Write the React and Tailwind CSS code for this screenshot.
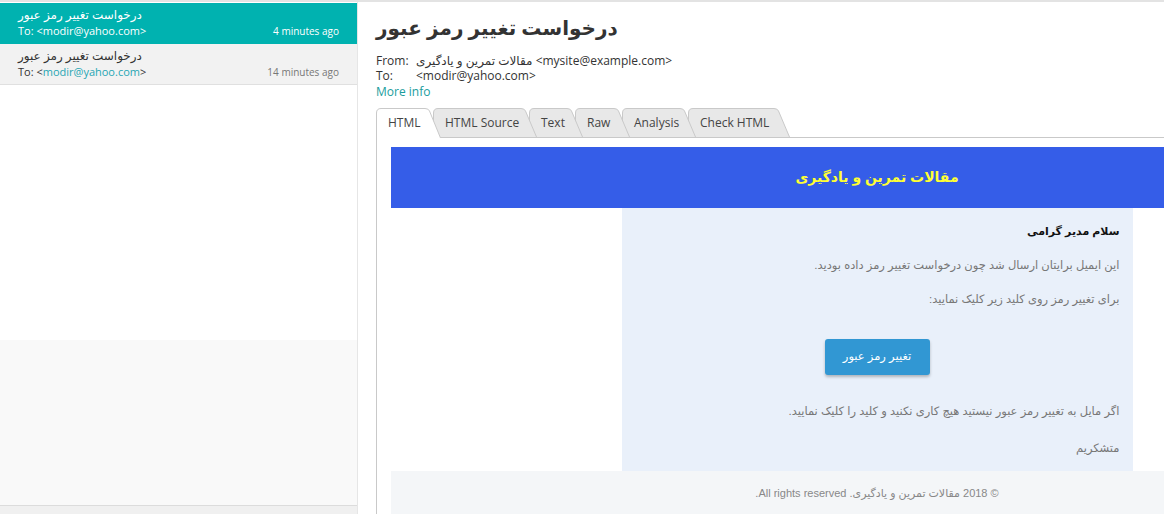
import React from 'react';

const ui = { fontFamily: '"Open Sans", "DejaVu Sans", sans-serif' };
const mail = { fontFamily: '"Liberation Sans", "DejaVu Sans", sans-serif' };

const tabs = [
  { label: 'HTML', w: 65, active: true },
  { label: 'HTML Source', w: 104 },
  { label: 'Text', w: 54 },
  { label: 'Raw', w: 55 },
  { label: 'Analysis', w: 74 },
  { label: 'Check HTML', w: 102 },
];

const Tab = ({ label, w, active, z }) => {
  const h = active ? 30 : 29;
  return (
    <div
      className={`relative mr-[-8px] flex items-center pl-3 text-[12px] text-[#444] ${active ? 'mb-[-1px] h-[30px] pb-px' : 'h-[29px]'}`}
      style={{ width: w, zIndex: active ? 20 : z }}
    >
      <svg className="absolute left-0 top-0" width={w} height={h}>
        <path
          d={`M0.5 ${h} L0.5 5 Q0.5 0.5 5 0.5 L${w - 16} 0.5 Q${w - 12.5} 0.5 ${w - 11.5} 3 L${w - 0.5} ${h}`}
          fill={active ? '#ffffff' : '#e8e8e8'}
          stroke="#c9c9c9"
        />
      </svg>
      <span className="relative">{label}</span>
    </div>
  );
};

const MailItem = ({ active, time }) => (
  <div
    className={`flex flex-col px-[18px] pt-[4px] pb-[4px] border-b ${active ? 'bg-[#00b2b0] border-[#00b2b0] text-white' : 'bg-[#f2f2f2] border-[#e0e0e0] text-[#333]'}`}
  >
    <div className="text-[12px] leading-[16px]" dir="rtl" style={{ textAlign: 'left' }}>
      <span>درخواست تغییر رمز عبور</span>
    </div>
    <div className="flex items-center justify-between text-[11px] leading-[16px]">
      <span>
        To: &lt;<span className={active ? '' : 'text-[#26a6b4]'}>modir@yahoo.com</span>&gt;
      </span>
      <span className={`text-[10px] ${active ? '' : 'text-[#777]'}`}>{time}</span>
    </div>
  </div>
);

export default function App() {
  return (
    <div className="flex h-[514px] w-[1164px] overflow-hidden border-t-2 border-[#e3e3e3] bg-white" style={ui}>
      {/* sidebar */}
      <aside className="flex w-[358px] shrink-0 flex-col border-r border-[#e6e6e6] pt-px">
        <MailItem active time="4 minutes ago" />
        <MailItem time="14 minutes ago" />
        <div className="h-[255px] bg-white" />
        <div className="flex-1 bg-[#f9f9f9]" />
        <div className="h-[9px] border-t border-[#dcdcdc] bg-[#f0f0f0]" />
      </aside>

      {/* message view */}
      <main className="flex min-w-0 flex-1 flex-col pl-[18px]">
        <h1 className="mt-[11px] text-[20px] font-bold leading-[30px] text-[#333]" dir="rtl" style={{ textAlign: 'left' }}>
          <span>درخواست تغییر رمز عبور</span>
        </h1>
        <div className="mt-[10px] text-[12px] leading-[15px] text-[#333]">
          <div className="flex">
            <span className="w-[40px]">From:</span>
            <span>مقالات تمرین و یادگیری &lt;mysite@example.com&gt;</span>
          </div>
          <div className="flex">
            <span className="w-[40px]">To:</span>
            <span>&lt;modir@yahoo.com&gt;</span>
          </div>
          <div className="mt-px text-[#1a9d9d]">More info</div>
        </div>

        <div className="mt-[9px] flex items-end border-b border-[#c9c9c9]">
          {tabs.map((t, i) => (
            <Tab key={t.label} {...t} z={10 - i} />
          ))}
        </div>

        <div className="flex-1 overflow-hidden border-l border-[#c9c9c9] pl-[14px] pt-[9px]" style={mail}>
          <div className="w-[972px]">
            <div className="flex h-[61px] items-center justify-center bg-[#355de8]" dir="rtl">
              <span className="text-[14px] font-bold text-[#ffff33]">مقالات تمرین و یادگیری</span>
            </div>
            <div className="mx-auto w-[511px] bg-[#e9f0fa] pb-[16px] pr-[13px] pt-[16px] text-right" dir="rtl">
              <p className="text-[11px] font-bold leading-[14px] text-[#111]">سلام مدیر گرامی</p>
              <p className="mt-[20px] text-[11.5px] leading-[14px] text-[#777]">این ایمیل برایتان ارسال شد چون درخواست تغییر رمز داده بودید.</p>
              <p className="mt-[20px] text-[11.5px] leading-[14px] text-[#777]">برای تغییر رمز روی کلید زیر کلیک نمایید:</p>
              <div className="mt-[33px] flex justify-center pl-[13px]">
                <span className="flex h-[36px] w-[105px] items-center justify-center rounded-[3px] bg-[#3197d3] text-[11.5px] text-white shadow-[0_2px_3px_rgba(0,0,0,0.25)]">
                  تغییر رمز عبور
                </span>
              </div>
              <p className="mt-[29px] text-[11.5px] leading-[14px] text-[#777]">اگر مایل به تغییر رمز عبور نیستید هیچ کاری نکنید و کلید را کلیک نمایید.</p>
              <p className="mt-[23px] text-[11.5px] leading-[14px] text-[#777]">متشکریم</p>
            </div>
            <div className="flex h-[44px] items-center justify-center bg-[#f4f6f8] text-[11px] text-[#888]" dir="rtl">
              <span>© 2018 مقالات تمرین و یادگیری. All rights reserved.</span>
            </div>
          </div>
        </div>
      </main>
    </div>
  );
}
